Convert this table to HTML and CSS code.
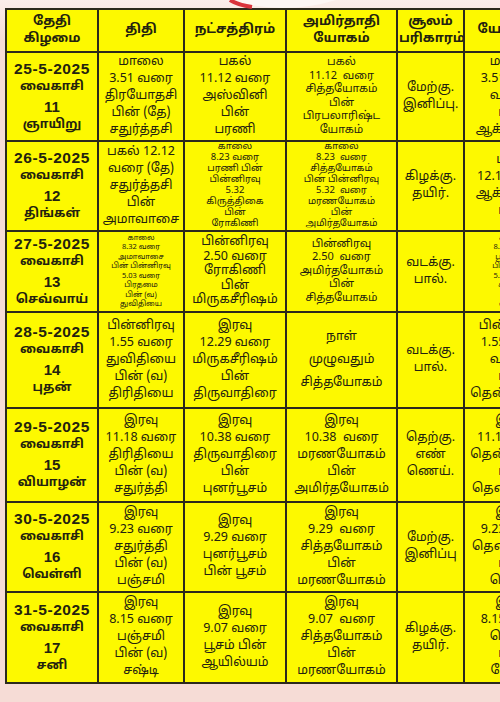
FILE: index.html
```html
<!DOCTYPE html>
<html lang="ta">
<head>
<meta charset="utf-8">
<title>வைகாசி பஞ்சாங்கம்</title>
<link rel="stylesheet" href="styles.css">
</head>
<body>
<div class="page">
  <svg class="logo" width="110" height="10" viewBox="0 0 110 10"><path d="M2 0 Q55 16 108 0 Z" fill="#fdf6f4"/><path d="M2 0 Q10 5 24 7" fill="none" stroke="#d9343c" stroke-width="4"/></svg>
  <table class="cal">
    <colgroup>
      <col class="c1"><col class="c2"><col class="c3"><col class="c4"><col class="c5"><col class="c6">
    </colgroup>
    <thead>
      <tr class="hrow">
        <th>தேதி<br>கிழமை</th>
        <th>திதி</th>
        <th>நட்சத்திரம்</th>
        <th>அமிர்தாதி<br>யோகம்</th>
        <th>சூலம்<br>பரிகாரம்</th>
        <th>யோகினி</th>
      </tr>
    </thead>
    <tbody>
      <tr class="r1">
        <td class="date"><div class="dn">25-5-2025</div><div class="dt">வைகாசி</div><div class="dd">11</div><div class="dt">ஞாயிறு</div></td>
        <td>மாலை<br>3.51 வரை<br>திரயோதசி<br>பின் (தே)<br>சதுர்த்தசி</td>
        <td>பகல்<br>11.12 வரை<br>அஸ்வினி<br>பின்<br>பரணி</td>
        <td class="sm">பகல்<br>11.12 &nbsp;வரை<br>சித்தயோகம்<br>பின்<br>பிரபலாரிஷ்ட<br>யோகம்</td>
        <td>மேற்கு.<br>இனிப்பு.</td>
        <td>மாலை<br>3.51 வரை<br>வடக்கு<br>பின்<br>ஆக்னேயம்</td>
      </tr>
      <tr class="r2">
        <td class="date"><div class="dn">26-5-2025</div><div class="dt">வைகாசி</div><div class="dd">12</div><div class="dt">திங்கள்</div></td>
        <td>பகல் 12.12<br>வரை (தே)<br>சதுர்த்தசி<br>பின்<br>அமாவாசை</td>
        <td class="xs">காலை<br>8.23 வரை<br>பரணி பின்<br>பின்னிரவு<br>5.32<br>கிருத்திகை<br>பின்<br>ரோகிணி</td>
        <td class="xs">காலை<br>8.23 &nbsp;வரை<br>சித்தயோகம்<br>பின் பின்னிரவு<br>5.32 &nbsp;வரை<br>மரணயோகம்<br>பின்<br>அமிர்தயோகம்</td>
        <td>கிழக்கு.<br>தயிர்.</td>
        <td>பகல்<br>12.12 வரை<br>ஆக்னேயம்<br>பின்</td>
      </tr>
      <tr class="r3">
        <td class="date"><div class="dn">27-5-2025</div><div class="dt">வைகாசி</div><div class="dd">13</div><div class="dt">செவ்வாய்</div></td>
        <td class="xxs">காலை<br>8.32 வரை<br>அமாவாசை<br>பின் பின்னிரவு<br>5.03 வரை<br>பிரதமை<br>பின் (வ)<br>துவிதியை</td>
        <td class="tight">பின்னிரவு<br>2.50 வரை<br>ரோகிணி<br>பின்<br>மிருகசீரிஷம்</td>
        <td class="sm">பின்னிரவு<br>2.50 &nbsp;வரை<br>அமிர்தயோகம்<br>பின்<br>சித்தயோகம்</td>
        <td>வடக்கு.<br>பால்.</td>
        <td class="xxs">காலை<br>8.32 வரை<br>பூமி பின்<br>பின்னிரவு<br>5.03 வரை<br>கிழக்கு<br>பின்<br>வடக்கு</td>
      </tr>
      <tr class="r4">
        <td class="date"><div class="dn">28-5-2025</div><div class="dt">வைகாசி</div><div class="dd">14</div><div class="dt">புதன்</div></td>
        <td>பின்னிரவு<br>1.55 வரை<br>துவிதியை<br>பின் (வ)<br>திரிதியை</td>
        <td>இரவு<br>12.29 வரை<br>மிருகசீரிஷம்<br>பின்<br>திருவாதிரை</td>
        <td class="wide">நாள்<br>முழுவதும்<br>சித்தயோகம்</td>
        <td>வடக்கு.<br>பால்.</td>
        <td>பின்னிரவு<br>1.55 வரை<br>வடக்கு<br>பின்<br>தென்கிழக்கு</td>
      </tr>
      <tr class="r5">
        <td class="date"><div class="dn">29-5-2025</div><div class="dt">வைகாசி</div><div class="dd">15</div><div class="dt">வியாழன்</div></td>
        <td>இரவு<br>11.18 வரை<br>திரிதியை<br>பின் (வ)<br>சதுர்த்தி</td>
        <td>இரவு<br>10.38 வரை<br>திருவாதிரை<br>பின்<br>புனர்பூசம்</td>
        <td>இரவு<br>10.38 &nbsp;வரை<br>மரணயோகம்<br>பின்<br>அமிர்தயோகம்</td>
        <td>தெற்கு.<br>எண்<br>ணெய்.</td>
        <td>இரவு<br>11.18 வரை<br>தென்கிழக்கு<br>பின்<br>தென்மேற்கு</td>
      </tr>
      <tr class="r6">
        <td class="date"><div class="dn">30-5-2025</div><div class="dt">வைகாசி</div><div class="dd">16</div><div class="dt">வெள்ளி</div></td>
        <td>இரவு<br>9.23 வரை<br>சதுர்த்தி<br>பின் (வ)<br>பஞ்சமி</td>
        <td>இரவு<br>9.29 வரை<br>புனர்பூசம்<br>பின் பூசம்</td>
        <td>இரவு<br>9.29 &nbsp;வரை<br>சித்தயோகம்<br>பின்<br>மரணயோகம்</td>
        <td>மேற்கு.<br>இனிப்பு</td>
        <td>இரவு<br>9.23 வரை<br>தென்மேற்கு<br>பின்<br>தெற்கு</td>
      </tr>
      <tr class="r7">
        <td class="date"><div class="dn">31-5-2025</div><div class="dt">வைகாசி</div><div class="dd">17</div><div class="dt">சனி</div></td>
        <td>இரவு<br>8.15 வரை<br>பஞ்சமி<br>பின் (வ)<br>சஷ்டி</td>
        <td>இரவு<br>9.07 வரை<br>பூசம் பின்<br>ஆயில்யம்</td>
        <td>இரவு<br>9.07 &nbsp;வரை<br>சித்தயோகம்<br>பின்<br>மரணயோகம்</td>
        <td>கிழக்கு.<br>தயிர்.</td>
        <td>இரவு<br>8.15 வரை<br>தெற்கு<br>பின்<br>மேற்கு</td>
      </tr>
    </tbody>
  </table>
</div>
</body>
</html>
```
FILE: styles.css
```css
html, body {
  margin: 0;
  padding: 0;
}
body {
  width: 500px;
  height: 702px;
  overflow: hidden;
  background: linear-gradient(#fbeeea 0px, #f6dcd6 40px, #f6dcd6 100%);
  font-family: "Noto Sans Tamil", "Lohit Tamil", "Noto Sans", "Liberation Sans", sans-serif;
  color: #23220f;
}
.page {
  position: relative;
  padding: 8px 0 0 5px;
}
.logo {
  position: absolute;
  left: 228px;
  top: 0;
}
.cal {
  border-collapse: collapse;
  table-layout: fixed;
  width: 555px;
  background: #fdf900;
  border: 2px solid #2c2a1c;
}
.c1 { width: 92px; }
.c2 { width: 86px; }
.c3 { width: 102px; }
.c4 { width: 111px; }
.c5 { width: 67px; }
.c6 { width: 97px; }
.cal th, .cal td {
  border: 2px solid #2c2a1c;
  text-align: center;
  vertical-align: middle;
  padding: 0 1px;
  overflow: hidden;
  white-space: nowrap;
}
.cal th {
  font-size: 13px;
  font-weight: 700;
  line-height: 17px;
}
.hrow { height: 43px; }
.cal td {
  font-size: 12.5px;
  line-height: 17px;
}
.cal td.date {
  font-weight: 700;
  padding: 0;
}
.date .dn {
  font-family: "Liberation Sans", sans-serif;
  font-size: 15.5px;
  letter-spacing: 0.6px;
  line-height: 19px;
  height: 19px;
}
.date .dd {
  font-family: "Liberation Sans", sans-serif;
  font-size: 15px;
  line-height: 19px;
  height: 19px;
}
.date .dt {
  font-size: 12.5px;
  line-height: 19px;
  height: 19px;
}
.cal td.sm {
  font-size: 11px;
  line-height: 13.5px;
}
.cal td.xs {
  font-size: 9.5px;
  line-height: 11px;
}
.cal td.xxs {
  font-size: 7.5px;
  line-height: 9.5px;
}
.cal td.tight {
  line-height: 14.5px;
}
.cal td.wide {
  line-height: 23px;
}
.r1 { height: 89px; }
.r2 { height: 90px; }
.r3 { height: 81px; }
.r4 { height: 96px; }
.r5 { height: 94px; }
.r6 { height: 90px; }
.r7 { height: 91px; }
```
